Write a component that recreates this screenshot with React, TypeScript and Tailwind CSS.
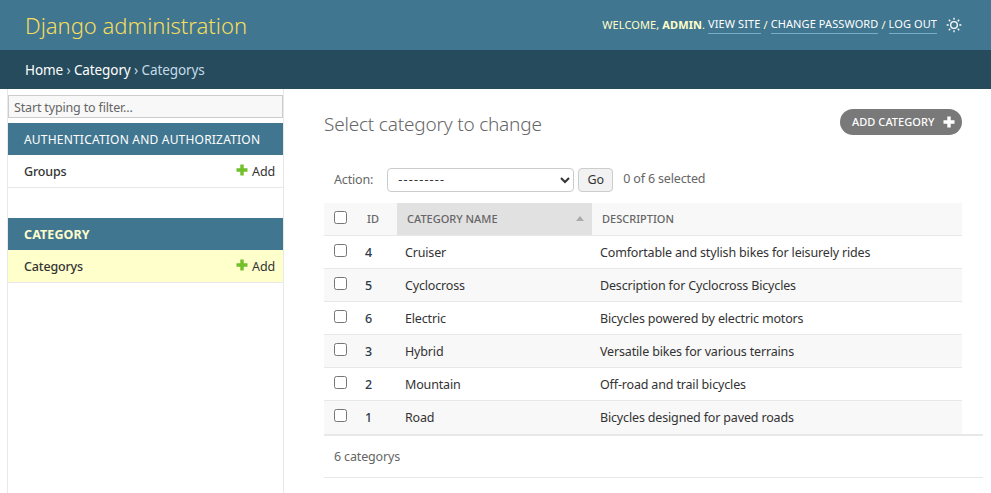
const rows = [
    { id: 4, name: "Cruiser", description: "Comfortable and stylish bikes for leisurely rides" },
    { id: 5, name: "Cyclocross", description: "Description for Cyclocross Bicycles" },
    { id: 6, name: "Electric", description: "Bicycles powered by electric motors" },
    { id: 3, name: "Hybrid", description: "Versatile bikes for various terrains" },
    { id: 2, name: "Mountain", description: "Off-road and trail bicycles" },
    { id: 1, name: "Road", description: "Bicycles designed for paved roads" },
];

function PlusIcon({ color, size = 12 }: { color: string; size?: number }) {
    return (
        <svg width={size} height={size} viewBox="0 0 12 12" fill={color}>
            <path d="M4.3 0.5h3.4v3.8h3.8v3.4H7.7v3.8H4.3V7.7H0.5V4.3h3.8z" />
        </svg>
    );
}

function SunIcon() {
    return (
        <svg width="16" height="16" viewBox="0 0 24 24" className="fill-white">
            <path d="M12 18a6 6 0 1 1 0-12 6 6 0 0 1 0 12zm0-2a4 4 0 1 0 0-8 4 4 0 0 0 0 8zM11 1h2v3h-2V1zm0 19h2v3h-2v-3zM3.515 4.929l1.414-1.414L7.05 5.636 5.636 7.05 3.515 4.93zM16.95 18.364l1.414-1.414 2.121 2.121-1.414 1.414-2.121-2.121zm2.121-14.85l1.414 1.415-2.121 2.121-1.414-1.414 2.121-2.121zM5.636 16.95l1.414 1.414-2.121 2.121-1.414-1.414 2.121-2.121zM23 11v2h-3v-2h3zM4 11v2H1v-2h3z" />
        </svg>
    );
}

function ModuleRow({ label, current }: { label: string; current?: boolean }) {
    return (
        <div className={`flex h-[33px] items-center justify-between border-b border-[#e8e8e8] pl-4 pr-2 pt-[3px] ${current ? "bg-[#ffffcc]" : "bg-white"}`}>
            <span className="font-medium text-[#333]">{label}</span>
            <span className="flex items-center gap-[4px] text-[#333]">
                <span className="-mt-[6px]"><PlusIcon color="#70bf2b" /></span>
                Add
            </span>
        </div>
    );
}

export default function App() {
    return (
        <div className="h-[493px] overflow-hidden bg-white text-[12.5px] tracking-[-0.16px] text-[#333] [font-family:'Noto_Sans',sans-serif]">
            <header className="flex h-[50px] items-center justify-between bg-[#417690] pl-[25px] pr-[29px]">
                <h1 className="text-[22px] font-light tracking-normal text-[#f5dd5d]">Django administration</h1>
                <div className="flex items-center text-[11px] tracking-[0.1px] text-[#ffc] uppercase">
                    <span>Welcome, <strong className="font-bold">admin</strong>.&nbsp;</span>
                    <a className="border-b border-[#79aec8] text-white">View site</a>
                    <span>&nbsp;/&nbsp;</span>
                    <a className="border-b border-[#79aec8] text-white">Change password</a>
                    <span>&nbsp;/&nbsp;</span>
                    <a className="border-b border-[#79aec8] text-white">Log out</a>
                    <span className="ml-[9px]"><SunIcon /></span>
                </div>
            </header>
            <nav className="flex h-[39px] items-center bg-[#264b5d] pl-[25px] pt-[2px] text-[13.5px] tracking-[-0.1px] text-[#c4dce8]">
                <a className="text-white">Home</a>
                <span>&nbsp;›&nbsp;</span>
                <a className="text-white">Category</a>
                <span>&nbsp;›&nbsp;</span>
                <span>Categorys</span>
            </nav>
            <div className="flex h-[404px]">
                <aside className="ml-[7px] w-[277px] shrink-0 border-x border-[#e8e8e8] pt-[6px]">
                    <input
                        placeholder="Start typing to filter..."
                        className="block h-[23px] w-full border border-[#ccc] bg-[#f8f8f8] px-[5px] pt-[1px] placeholder:text-[#666]"
                    />
                    <div className="mt-[5px] flex h-[32px] items-center bg-[#417690] pl-4 pt-[1px] text-[12px] tracking-[0.2px] text-white uppercase">
                        Authentication and authorization
                    </div>
                    <ModuleRow label="Groups" />
                    <div className="mt-[30px] flex h-[32px] items-center bg-[#417690] pl-4 pt-[3px] text-[12.5px] font-bold tracking-[0.1px] text-[#ffc] uppercase">
                        Category
                    </div>
                    <ModuleRow label="Categorys" current />
                </aside>
                <main className="min-w-0 flex-1 pl-10 pr-2">
                    <div className="flex items-start justify-between pr-[21px] pt-5">
                        <h2 className="mt-[1px] text-[19px] font-light tracking-[-0.2px] text-[#666]">Select category to change</h2>
                        <a className="flex h-[26px] w-[122px] items-center justify-between rounded-full bg-[#797979] pl-3 pr-[7px] text-[11px] font-medium tracking-[0.05px] text-white uppercase">
                            Add category
                            <PlusIcon color="#ffffff" />
                        </a>
                    </div>
                    <div className="mt-[29px] flex h-[24px] items-center pl-[10px]">
                        <label className="pt-[2px] text-[#666]">Action:</label>
                        <select className="ml-[14px] h-[24px] w-[187px] rounded border border-[#ccc] bg-white pl-[6px] tracking-[1.2px] text-[#333]">
                            <option>---------</option>
                        </select>
                        <button className="ml-[4px] h-[24px] w-[35px] rounded border border-[#ccc] bg-[#f2f2f2] pt-[1px] text-[#333]">Go</button>
                        <span className="ml-[10px] -mt-[1px] text-[#666]">0 of 6 selected</span>
                    </div>
                    <table className="mt-[11px] w-[638px] table-fixed border-collapse">
                        <thead>
                            <tr className="h-[33px] bg-[#f8f8f8] text-left text-[11px] font-medium tracking-normal text-[#666] uppercase">
                                <th className="w-[33px] pl-[10px] font-normal"><input type="checkbox" className="-mt-[2px] block h-[13px] w-[13px]" /></th>
                                <th className="w-[40px] pl-[10px] font-medium">ID</th>
                                <th className="w-[195px] bg-[#e1e1e1] pl-[10px] font-medium">
                                    <div className="flex items-center justify-between pr-[8px]">
                                        Category name
                                        <span className="h-0 w-0 border-x-[4px] border-b-[5px] border-x-transparent border-b-[#aaa]" />
                                    </div>
                                </th>
                                <th className="pl-[10px] font-medium">Description</th>
                            </tr>
                        </thead>
                        <tbody>
                            {rows.map((row, i) => (
                                <tr key={row.id} className={`h-[33px] border-t border-[#e8e8e8] ${i % 2 === 1 ? "bg-[#f8f8f8]" : "bg-white"}`}>
                                    <td className="pl-[10px]"><input type="checkbox" className="-mt-[3px] block h-[13px] w-[13px]" /></td>
                                    <td className="pl-2 pt-[2px] font-medium text-[#2b3a4a]">{row.id}</td>
                                    <td className="pl-2 pt-[2px]">{row.name}</td>
                                    <td className="pl-2 pt-[2px]">{row.description}</td>
                                </tr>
                            ))}
                        </tbody>
                    </table>
                    <div className="flex h-[44px] items-center border-y border-t-2 border-y-[#e8e8e8] pl-[10px] pt-[2px] text-[#666]">
                        6 categorys
                    </div>
                </main>
            </div>
        </div>
    );
}
